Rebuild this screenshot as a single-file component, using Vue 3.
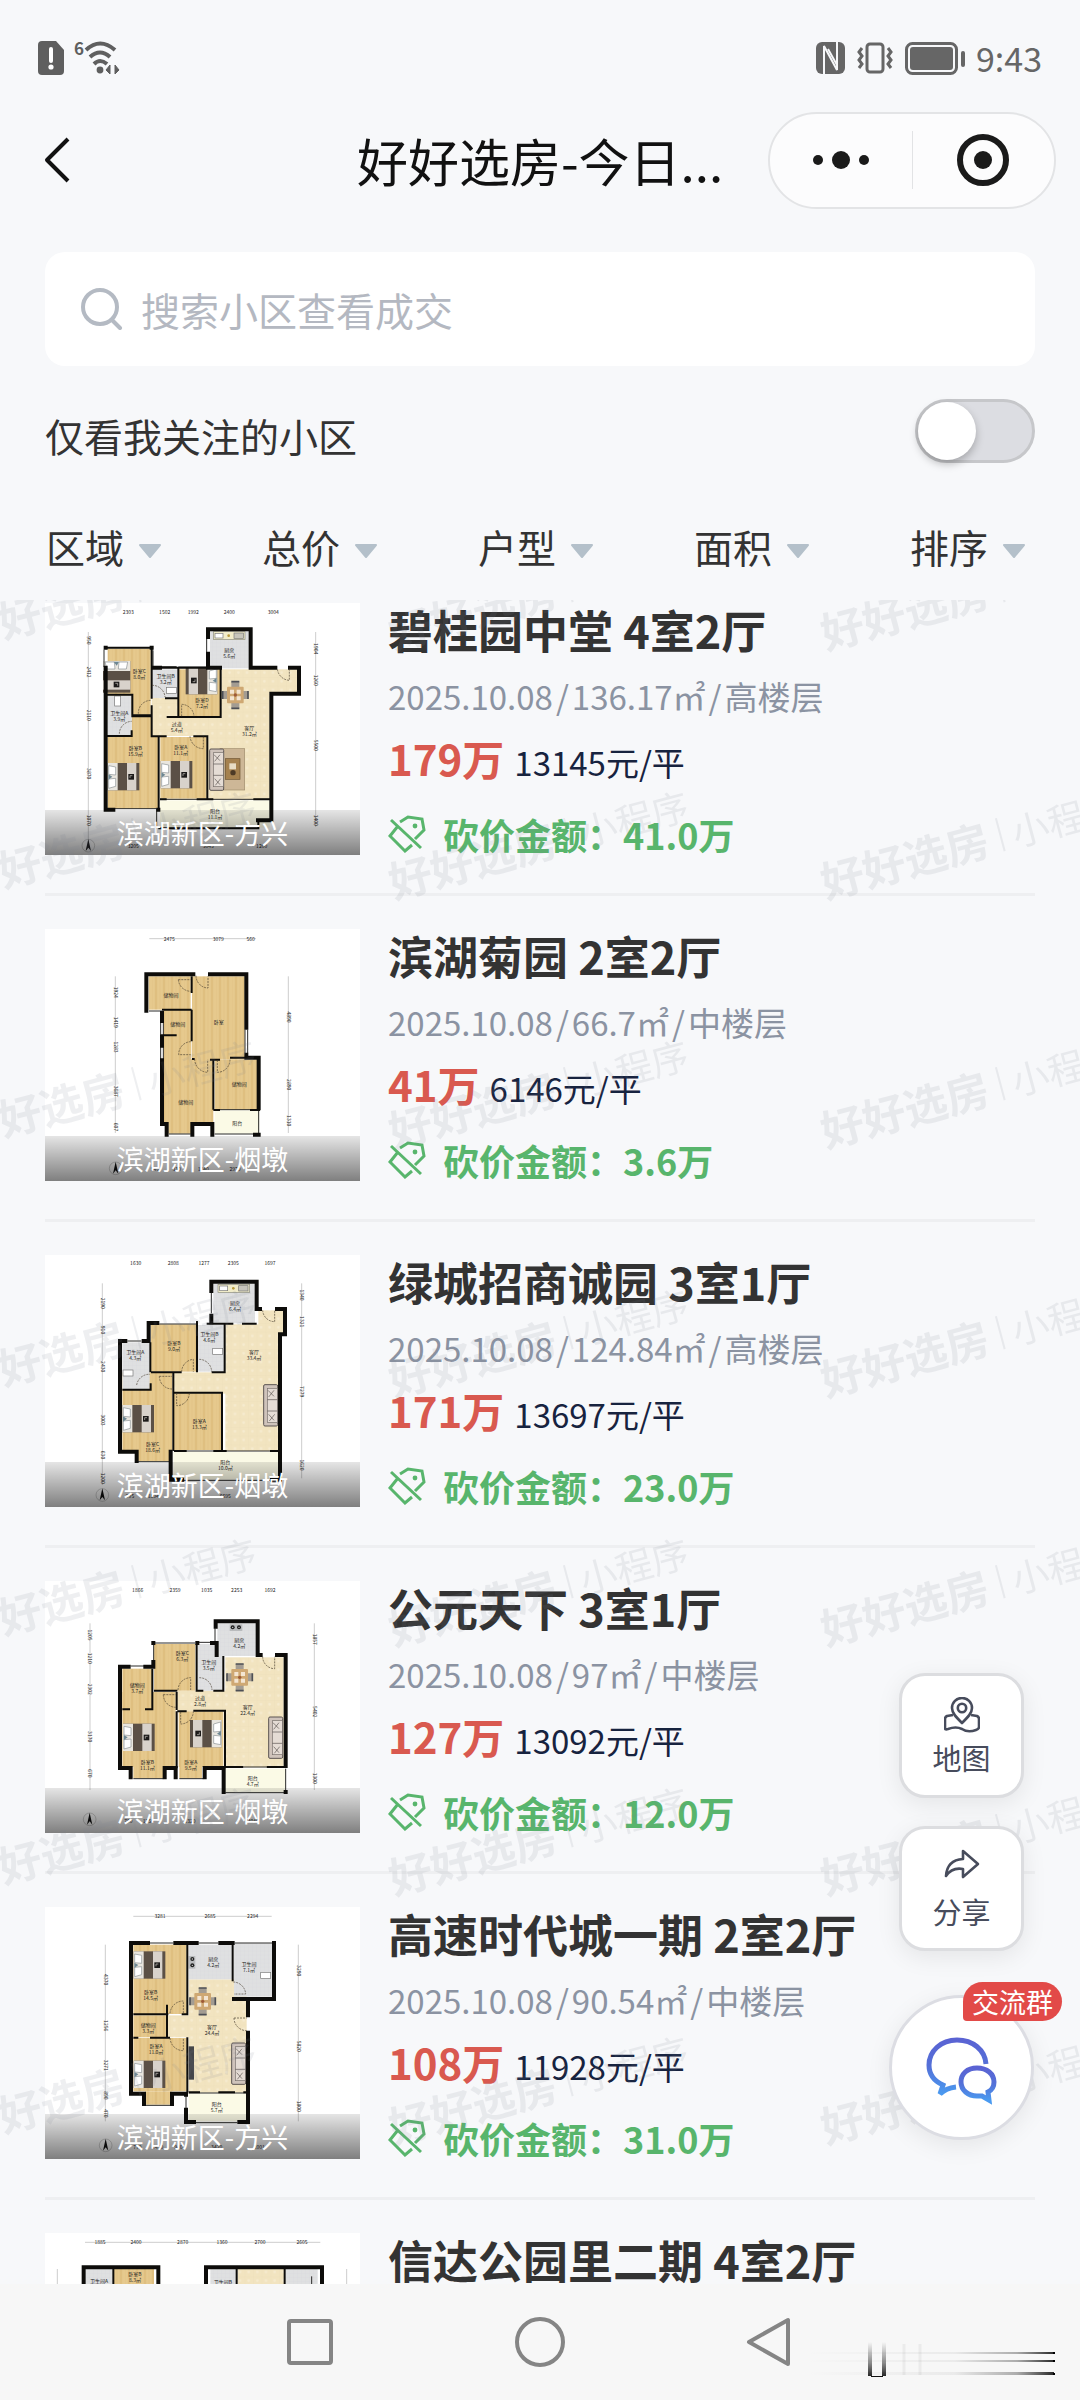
<template>
  <div class="app">
    <svg class="defs" width="0" height="0" aria-hidden="true">
      <defs>
        <symbol id="bed" viewBox="0 0 95 82" overflow="visible">
          <rect width="95" height="82" fill="#5b5046" />
          <rect width="30" height="82" fill="#e9e6df" />
          <path d="M3 8L24 12V36L3 34ZM3 48L24 46V70L3 76Z" fill="#fff" stroke="#8a8f92" stroke-width="2" />
          <path d="M2 34L14 41L2 50Z" fill="#6d8793" />
          <rect x="58" width="28" height="82" fill="#d8d2cb" />
          <rect x="62" y="33" width="17" height="17" fill="#1c1a19" />
          <path d="M67 45V38H74" fill="none" stroke="#cfc9c2" stroke-width="2" />
        </symbol>
        <symbol id="dining" viewBox="0 0 80 84" overflow="visible">
          <path d="M28 2H52V20H28ZM28 64H52V82H28ZM2 30H18V54H2ZM62 30H78V54H62Z" fill="#a39c92" />
          <path d="M28 2H52M28 82H52M2 30V54M78 30V54" stroke="#4d4f55" stroke-width="5" />
          <rect x="15" y="17" width="50" height="50" rx="3" fill="#cfa873" />
          <path d="M24 26h12v12h-12zM44 26h12v12h-12zM24 46h12v12h-12zM44 46h12v12h-12z" fill="#f4e5d2" />
          <circle cx="40" cy="42" r="5" fill="#9e5a38" />
        </symbol>
        <symbol id="sofa" viewBox="0 0 44 126" overflow="visible">
          <rect x="1" y="1" width="42" height="124" rx="4" fill="#cfc3bb" stroke="#5c5552" stroke-width="3" />
          <rect x="12" y="12" width="30" height="102" fill="#e5dcd5" stroke="#77706b" stroke-width="2" />
          <path d="M12 46H42M12 80H42M14 18L32 36M32 18L16 38M16 90L32 108M34 90L18 110" stroke="#59524f" stroke-width="2" />
        </symbol>
        <symbol id="rug" viewBox="0 0 74 124" overflow="visible">
          <rect width="74" height="124" fill="#cdb797" stroke="#a08c6d" stroke-width="2" />
          <rect x="16" y="30" width="44" height="62" fill="#a5814f" stroke="#6d5330" stroke-width="2" />
          <rect x="28" y="44" width="20" height="18" fill="#e8dcc4" />
          <circle cx="39" cy="72" r="8" fill="#4d3a26" />
        </symbol>
        <symbol id="stove" viewBox="0 0 95 26" overflow="visible">
          <rect width="95" height="24" fill="#f1ecc9" stroke="#8b8a7c" stroke-width="2" />
          <rect x="5" y="5" width="24" height="14" fill="#fff" stroke="#777" stroke-width="2" />
          <circle cx="46" cy="12" r="4" fill="#b89a3c" />
          <rect x="62" y="4" width="28" height="16" fill="#c7c5bb" stroke="#777" stroke-width="2" />
        </symbol>
        <symbol id="hob" viewBox="0 0 38 20" overflow="visible">
          <rect width="38" height="20" fill="#b9bbbd" />
          <circle cx="9" cy="9" r="6" fill="#222" />
          <circle cx="28" cy="9" r="6" fill="#222" />
          <circle cx="9" cy="9" r="2" fill="#ddd" />
          <circle cx="28" cy="9" r="2" fill="#ddd" />
        </symbol>
        <symbol id="basin" viewBox="0 0 30 18" overflow="visible">
          <rect width="30" height="18" fill="#fff" stroke="#777" stroke-width="2" />
        </symbol>
        <symbol id="compass" viewBox="0 0 40 60" overflow="visible">
          <circle cx="20" cy="38" r="19" fill="none" stroke="#777" stroke-width="1" />
          <path d="M20 18L28 54L20 44L12 54Z" fill="#111" />
        </symbol>
        <pattern id="wood" width="48" height="60" patternUnits="userSpaceOnUse">
          <rect width="48" height="60" fill="#e6c98d" />
          <path d="M12 0V60M36 0V60" stroke="#dfbf80" stroke-width="7" />
          <path d="M24 0V60M0 0V60" stroke="#d7b475" stroke-width="1" />
        </pattern>
        <pattern id="tile" width="12" height="12" patternUnits="userSpaceOnUse">
          <rect width="12" height="12" fill="#dfe0e1" />
          <path d="M0 0H12M0 0V12" stroke="#d3d5d7" stroke-width="1" />
        </pattern>
        <pattern id="stone" width="26" height="26" patternUnits="userSpaceOnUse">
          <rect width="26" height="26" fill="#f2e4c0" />
          <path d="M0 0H26M0 0V26" stroke="#eedfb8" stroke-width="2" />
          <circle cx="13" cy="13" r="4" fill="#f6ebcf" />
        </pattern>
        <linearGradient id="chat" x1="0" y1="0" x2="0" y2="1">
          <stop offset="0" stop-color="#5a63d3" />
          <stop offset="0.5" stop-color="#5471d8" />
          <stop offset="1" stop-color="#4a9af0" />
        </linearGradient>
      </defs>
    </svg>

    <div class="status-bar">
      <div class="status-group">
        <svg width="26" height="34" viewBox="0 0 26 34">
          <path d="M4 0H18L26 9V30a4 4 0 0 1-4 4H4a4 4 0 0 1-4-4V4a4 4 0 0 1 4-4Z" fill="#5f5f5f" />
          <path d="M13 8V20" stroke="#fff" stroke-width="4" stroke-linecap="round" />
          <circle cx="13" cy="26" r="2.6" fill="#fff" />
        </svg>
        <span class="wifi-gen">6</span>
        <svg width="36" height="34" viewBox="0 0 36 34" fill="none" stroke="#5f5f5f" stroke-width="4">
          <path d="M2 9Q16 -4 31 9M6 16Q16 7 26 16M10 23Q16 17 23 23" />
          <circle cx="16" cy="29" r="3.4" fill="#5f5f5f" stroke="none" />
          <path d="M26 24V33L22 29ZM31 24V33L35 29Z" fill="#5f5f5f" stroke-width="1" />
        </svg>
      </div>
      <div class="status-group right">
        <svg width="29" height="32" viewBox="0 0 29 32">
          <rect width="29" height="32" rx="6" fill="#666" />
          <path d="M8 32V4L21 28V0" fill="none" stroke="#f7f8fa" stroke-width="2" />
          <path d="M12 7L21 23" stroke="#f7f8fa" stroke-width="2" />
        </svg>
        <svg width="38" height="32" viewBox="0 0 38 32" fill="none" stroke="#666" stroke-width="3">
          <rect x="11" y="2" width="16" height="28" rx="3" />
          <path d="M6 6L3 10L6 14L3 18L6 22L3 26M32 6L35 10L32 14L35 18L32 22L35 26" />
        </svg>
        <svg width="60" height="33" viewBox="0 0 60 33">
          <rect x="1.5" y="1.5" width="50" height="30" rx="6" fill="none" stroke="#666" stroke-width="3" />
          <rect x="5" y="5" width="43" height="23" rx="3" fill="#666" />
          <rect x="56" y="9" width="4" height="16" rx="2" fill="#666" />
        </svg>
        <span class="clock">9:43</span>
      </div>
    </div>

    <header class="nav-bar">
      <button class="back" aria-label="返回">
        <svg width="26" height="46" viewBox="0 0 26 46" fill="none" stroke="#111" stroke-width="4">
          <path d="M24 2L3 23L24 44" stroke-linejoin="round" />
        </svg>
      </button>
      <h1>好好选房-今日...</h1>
      <div class="capsule">
        <button aria-label="更多">
          <svg width="58" height="20" viewBox="0 0 58 20" fill="#1a1a1a">
            <circle cx="6" cy="10" r="5" />
            <circle cx="29" cy="10" r="9" />
            <circle cx="52" cy="10" r="5" />
          </svg>
        </button>
        <span class="capsule-line"></span>
        <button aria-label="关闭">
          <svg width="54" height="54" viewBox="0 0 54 54">
            <circle cx="27" cy="27" r="23" fill="none" stroke="#1a1a1a" stroke-width="6" />
            <circle cx="27" cy="27" r="9" fill="#1a1a1a" />
          </svg>
        </button>
      </div>
    </header>

    <label class="search">
      <svg width="42" height="42" viewBox="0 0 42 42" fill="none" stroke="#b4bac3" stroke-width="4" stroke-linecap="round">
        <circle cx="19" cy="19" r="17" />
        <path d="M31 32L39 40" />
      </svg>
      <input v-model="keyword" type="text" placeholder="搜索小区查看成交" aria-label="搜索小区查看成交" />
    </label>

    <div class="follow-row">
      <label for="only-followed">仅看我关注的小区</label>
      <input id="only-followed" v-model="onlyFollowed" type="checkbox" class="switch" />
    </div>

    <div class="filters">
      <label v-for="name in filters" :key="name" class="filter">
        <select :aria-label="name">
          <option>{{ name }}</option>
        </select>
        <svg width="24" height="15" viewBox="0 0 24 15">
          <path d="M2 1H22L12 13Z" fill="#b4c0ca" stroke="#b4c0ca" stroke-width="2" stroke-linejoin="round" />
        </svg>
      </label>
    </div>

    <main class="list-wrap">
      <div class="list">
        <article v-for="item in houses" :key="item.name" class="house">
          <div class="thumb">
            <svg class="plan" :viewBox="item.plan.box">
              <template v-for="(rooms, kind) in item.plan.floors" :key="kind">
                <rect
                  v-for="(r, i) in rooms"
                  :key="i"
                  :x="r[0]"
                  :y="r[1]"
                  :width="r[2]"
                  :height="r[3]"
                  :fill="floorFill[kind]"
                />
              </template>
              <use
                v-for="(f, i) in item.plan.furniture"
                :key="'f' + i"
                :href="'#' + f[0]"
                :width="sizes[f[0]][0]"
                :height="sizes[f[0]][1]"
                :transform="`translate(${f[1]} ${f[2]}) rotate(${f[3] || 0})`"
              />
              <path :d="item.plan.windows" fill="none" stroke="#2a2a28" stroke-width="3" />
              <path :d="item.plan.thin" fill="none" stroke="#0d0c0a" stroke-width="6" />
              <path :d="item.plan.walls" fill="none" stroke="#0d0c0a" stroke-width="12" stroke-linecap="square" />
              <path :d="item.plan.doors" fill="none" stroke="#4a4030" stroke-width="2" stroke-dasharray="6 3" />
              <g class="plan-text">
                <template v-for="(l, i) in item.plan.labels" :key="'l' + i">
                  <text :x="l[0]" :y="l[1]">{{ l[2] }}</text>
                  <text v-if="l[3]" :x="l[0]" :y="l[1] + 18">{{ l[3] }}</text>
                </template>
              </g>
              <g class="plan-dims">
                <path :d="item.plan.rulers" stroke="#666" stroke-width="1" />
                <text v-for="(d, i) in item.plan.dims" :key="'d' + i" :x="d[0]" :y="d[1]">{{ d[2] }}</text>
                <text
                  v-for="(d, i) in item.plan.sideDims"
                  :key="'s' + i"
                  :transform="`translate(${d[0]} ${d[1]}) rotate(90)`"
                  y="5"
                >{{ d[2] }}</text>
              </g>
              <use
                v-if="item.plan.compass"
                href="#compass"
                :x="item.plan.compass[0]"
                :y="item.plan.compass[1]"
                width="40"
                height="60"
              />
            </svg>
            <div v-if="item.district" class="district">{{ item.district }}</div>
          </div>
          <div class="info">
            <h2>{{ item.name }} {{ item.rooms }}</h2>
            <template v-if="item.total">
              <p class="meta">
                <span>{{ item.date }}</span><i>/</i><span>{{ item.area }}㎡</span><i>/</i><span>{{ item.floor }}</span>
              </p>
              <p class="price">
                <strong>{{ item.total }}万</strong>
                <span>{{ item.unit }}元/平</span>
              </p>
              <p class="bargain">
                <svg width="38" height="38" viewBox="0 0 38 38" fill="none" stroke="#58b56c" stroke-width="3">
                  <path d="M12 7L20 2L34 4L36 15L27 24" />
                  <path d="M10 11L2 21L17 36L24 30" />
                  <path d="M3 5L33 33" />
                  <circle cx="27" cy="11" r="2.4" fill="#58b56c" stroke="none" />
                </svg>
                <span>砍价金额：{{ item.bargain }}万</span>
              </p>
            </template>
          </div>
        </article>
      </div>
      <svg class="watermark" width="100%" height="100%" aria-hidden="true">
        <defs>
          <pattern id="mark" x="380" y="57" width="432" height="249" patternUnits="userSpaceOnUse">
            <g transform="translate(14 242) rotate(-15)" fill="#7a8090">
              <text x="0" y="0" font-size="43" font-weight="700">好好选房</text>
              <rect x="184" y="-34" width="2" height="34" />
              <text x="197" y="-1" font-size="37">小程序</text>
            </g>
          </pattern>
        </defs>
        <rect width="100%" height="100%" fill="url(#mark)" />
      </svg>
    </main>

    <div class="floating">
      <button class="float-btn">
        <svg width="36" height="36" viewBox="0 0 36 36" fill="none" stroke="#474c5c" stroke-width="2.6" stroke-linejoin="round">
          <path d="M18 26C12 20 8 16 8 11a10 10 0 0 1 20 0c0 5-4 9-10 15Z" />
          <circle cx="18" cy="11" r="4.2" />
          <path d="M9 18L3 19Q1 20 1 22V31Q1 33 4 32Q12 29 18 32Q24 36 32 33Q35 32 35 30V22Q35 20 33 19L27 18" />
        </svg>
        <span>地图</span>
      </button>
      <button class="float-btn share">
        <svg width="36" height="30" viewBox="0 0 36 30" fill="none" stroke="#474c5c" stroke-width="2.6" stroke-linejoin="round">
          <path d="M19 2L34 15L19 28V20Q8 18 2 27Q3 11 19 10Z" />
        </svg>
        <span>分享</span>
      </button>
      <button class="chat-btn">
        <svg width="72" height="68" viewBox="0 0 72 68" fill="none" stroke="url(#chat)" stroke-width="5">
          <path d="M60 27C59 13 47 3 31 3C15 3 3 14 3 28C3 37 8 44 17 48L14 57Q20 51 30 50" />
          <path d="M51 31C41 31 35 37 35 45C35 53 42 59 51 59L56 59L63 63L62 55C66 53 68 49 68 45C68 37 61 31 51 31Z" />
        </svg>
        <span class="badge">交流群</span>
      </button>
    </div>

    <nav class="system-bar">
      <button aria-label="最近任务">
        <svg width="50" height="50" viewBox="0 0 50 50" fill="none" stroke="#858585" stroke-width="4">
          <rect x="4" y="4" width="42" height="42" rx="2" />
        </svg>
      </button>
      <button aria-label="主页">
        <svg width="50" height="50" viewBox="0 0 50 50" fill="none" stroke="#858585" stroke-width="4">
          <circle cx="25" cy="25" r="23" />
        </svg>
      </button>
      <button aria-label="返回上一页">
        <svg width="50" height="50" viewBox="0 0 50 50" fill="none" stroke="#858585" stroke-width="4" stroke-linejoin="round">
          <path d="M4 25L43 3V47Z" />
        </svg>
      </button>
      <svg class="streaks" width="250" height="38" viewBox="0 0 250 38">
        <defs>
          <linearGradient id="streak-x">
            <stop offset="0" stop-color="#222" stop-opacity="0" />
            <stop offset="0.6" stop-color="#222" stop-opacity="0.06" />
            <stop offset="0.85" stop-color="#222" stop-opacity="0.35" />
            <stop offset="1" stop-color="#111" stop-opacity="0.9" />
          </linearGradient>
          <linearGradient id="streak-y" x1="0" y1="0" x2="0" y2="1">
            <stop offset="0" stop-color="#222" stop-opacity="0" />
            <stop offset="0.6" stop-color="#222" stop-opacity="0.5" />
            <stop offset="1" stop-color="#111" stop-opacity="0.9" />
          </linearGradient>
        </defs>
        <path d="M98 4V35M114 4V35" stroke="#ebebeb" stroke-width="3" />
        <rect x="0" y="12" width="248" height="2" fill="url(#streak-x)" />
        <rect x="0" y="20" width="248" height="2" fill="url(#streak-x)" />
        <rect x="0" y="32" width="248" height="3" fill="url(#streak-x)" />
        <path d="M247 12h2v2h-2zM247 20h2v2h-2zM247 33h2v2h-2z" fill="#000" />
        <rect x="62" y="2" width="4" height="34" fill="url(#streak-y)" />
        <rect x="76" y="2" width="4" height="34" fill="url(#streak-y)" />
        <rect x="65" y="36" width="12" height="1" fill="#111" />
      </svg>
    </nav>
  </div>
</template>

<script setup>
import { ref } from 'vue'

const keyword = ref('')
const onlyFollowed = ref(false)
const filters = ['区域', '总价', '户型', '面积', '排序']

const floorFill = {
  wood: 'url(#wood)',
  tile: 'url(#tile)',
  stone: 'url(#stone)',
  balcony: '#fbfae6',
  dark: '#45464a'
}

const sizes = {
  bed: [95, 82],
  dining: [80, 84],
  sofa: [44, 126],
  rug: [74, 124],
  stove: [95, 26],
  hob: [38, 20],
  basin: [30, 18]
}

// 户型图：地板矩形、墙体路径、家具与标注
const planA = {
  box: '135 38 945 756',
  floors: {
    stone: [[664, 237, 145, 390], [800, 237, 92, 70], [455, 322, 215, 115], [625, 380, 60, 247]],
    wood: [[323, 175, 129, 200], [537, 237, 124, 142], [323, 440, 154, 215], [481, 440, 139, 185], [395, 378, 58, 65]],
    tile: [[455, 237, 78, 86], [323, 315, 72, 122], [630, 122, 118, 112]],
    balcony: [[480, 630, 329, 82]]
  },
  furniture: [['bed', 391, 212, 90], ['bed', 652, 312, 180], ['bed', 323, 518], ['bed', 482, 512], ['dining', 666, 272], ['rug', 660, 475], ['sofa', 628, 475], ['stove', 640, 124], ['basin', 500, 291], ['basin', 362, 317, 90]],
  walls: 'M624 140V117H752V232H826M870 232H897V310H814V690H774M624 190V232H660M317 172V172M455 172V172M317 232V658H340M460 232H480M475 658V658',
  thin: 'M317 172H455V232H535M455 232V325M455 345V375H400M317 313H397V378H455M395 420V437H317M476 440V655M455 375V438H500M495 324H535V232H662V380H500M535 325V380M580 438H622V625M480 627H500M590 627H640M760 627H812M475 714H775V690',
  windows: 'M312 178V230M459 180V230M485 229H530M535 230H660M330 655H470V714M620 145V185M480 627H812M480 714H770',
  doors: 'M415 370A38 38 0 0 1 452 330M456 285A38 38 0 0 1 495 320M545 378V342A38 38 0 0 1 582 378M570 438A40 40 0 0 0 610 475V438M358 430A38 38 0 0 1 395 393M868 235V270A38 38 0 0 1 832 235',
  labels: [[418, 248, '卧室C', '8.0㎡'], [497, 262, '卫生间B', '3.2㎡'], [606, 336, '卧室D', '7.2㎡'], [688, 185, '厨房', '5.6㎡'], [748, 418, '客厅', '31.2㎡'], [358, 374, '卫生间A', '3.9㎡'], [530, 408, '过道', '5.4㎡'], [406, 480, '卧室B', '15.9㎡'], [542, 476, '卧室A', '11.1㎡'], [645, 668, '阳台', '11.1㎡']],
  rulers: 'M265 125V770M947 125V710',
  dims: [[385, 71, '2303'], [494, 71, '1502'], [580, 71, '1992'], [688, 71, '2400'], [820, 71, '3004'], [400, 772, '3205'], [625, 772, '3045'], [785, 772, '1200']],
  sideDims: [[265, 150, '950'], [265, 245, '2412'], [265, 375, '2110'], [265, 550, '3870'], [265, 690, '1070'], [947, 175, '1904'], [947, 270, '1260'], [947, 465, '5500'], [947, 690, '1400']],
  compass: [245, 728]
}

const planB = {
  box: '15 28 945 756',
  floors: {
    wood: [[326, 170, 126, 100], [370, 270, 84, 150], [456, 170, 158, 250], [372, 418, 148, 194], [385, 600, 68, 42], [524, 420, 128, 150]],
    balcony: [[524, 572, 134, 70]]
  },
  furniture: [],
  walls: 'M460 164H319V273M510 164H619V324M619 405V414H656V566M366 280V304M366 350V378M366 422V613H380V645M457 645V613H517V645M645 645H656',
  thin: 'M455 170V220M455 270V365M366 270H455M370 347H410M520 420V570M456 418H464M510 420H540M570 414H619M520 571H540M630 571H660',
  windows: 'M327 274H366M387 643H452M524 643H656V572M362 308V345M362 382V418M370 308V345M370 382V418M615 330V400M623 330V400M524 570H650',
  doors: 'M415 180H452M415 180A38 38 0 0 0 452 215M468 168A37 37 0 0 0 504 205V170M452 366A38 38 0 0 0 416 405H452M464 418A40 40 0 0 0 503 458V420M570 420A38 38 0 0 1 532 458V420',
  labels: [[393, 232, '储物间'], [413, 318, '储物间'], [536, 314, '卧室'], [437, 552, '储物间'], [598, 498, '储物间'], [592, 615, '阳台']],
  rulers: 'M328 57H648M226 170V640M745 170V640',
  dims: [[388, 63, '2475'], [535, 63, '3079'], [632, 63, '560'], [345, 754, '940'], [410, 754, '330'], [490, 754, '1240'], [585, 754, '2920']],
  sideDims: [[226, 218, '1924'], [226, 308, '1419'], [226, 382, '1283'], [226, 515, '3687'], [226, 622, '607'], [745, 292, '4890'], [745, 495, '2890'], [745, 603, '1310']],
  compass: [207, 708]
}

const planC = {
  box: '15 30 945 756',
  floors: {
    stone: [[556, 238, 160, 380], [655, 196, 78, 72], [400, 382, 160, 64]],
    wood: [[333, 238, 136, 142], [247, 382, 150, 235], [292, 600, 96, 48], [402, 445, 142, 170]],
    tile: [[520, 115, 125, 120], [474, 240, 78, 140], [247, 292, 82, 140]],
    balcony: [[400, 620, 315, 84]]
  },
  furniture: [['bed', 247, 480], ['sofa', 670, 418], ['stove', 534, 118], ['basin', 518, 310], ['basin', 249, 375]],
  walls: 'M514 138V110H650V192H660M711 192H735V268H720V700M326 286V234H352M240 288H256M311 288H326M240 288V620H290V648M392 620V704H426M696 704H720M514 212V232',
  thin: 'M471 228V382M554 238V382H515M333 382H425M247 434H332V415M400 382V618M402 443H546V618M331 292V382M500 236H580M606 236H650M402 618H440M520 618H560M690 618H715',
  windows: 'M514 140V205M358 237H470M430 706H690M290 650H392M402 618H715M262 288H304',
  doors: 'M425 380A38 38 0 0 1 460 343V380M478 343A38 38 0 0 1 515 380M290 420A38 38 0 0 1 330 388M358 394H396M358 394A38 38 0 0 0 396 432M448 445A38 38 0 0 1 410 482V445M668 196A36 36 0 0 0 704 230V196',
  labels: [[585, 180, '厨房', '6.4㎡'], [508, 272, '卫生间B', '4.6㎡'], [402, 300, '卧室B', '9.0㎡'], [286, 328, '卫生间A', '4.3㎡'], [642, 328, '客厅', '33.4㎡'], [478, 534, '卧室A', '13.3㎡'], [338, 602, '卧室C', '18.6㎡'], [556, 657, '阳台', '10.0㎡']],
  rulers: 'M187 115V720M785 115V700',
  dims: [[287, 61, '1630'], [400, 61, '2808'], [492, 61, '1277'], [580, 61, '2305'], [690, 61, '1697'], [270, 760, '795'], [340, 760, '1804'], [556, 760, '6695']],
  sideDims: [[187, 175, '2190'], [187, 255, '910'], [187, 365, '2430'], [187, 525, '3003'], [187, 630, '630'], [187, 700, '1200'], [785, 150, '1340'], [785, 230, '1321'], [785, 440, '7279'], [785, 660, '1620']],
  compass: [167, 712]
}

const planD = {
  box: '15 33 945 756',
  floors: {
    stone: [[556, 262, 175, 330], [412, 362, 150, 62]],
    wood: [[342, 222, 124, 140], [247, 296, 90, 122], [247, 366, 160, 225], [280, 588, 90, 36], [416, 424, 134, 167], [418, 588, 68, 36]],
    tile: [[532, 160, 118, 98], [474, 222, 76, 140]],
    balcony: [[556, 596, 180, 70]]
  },
  furniture: [['bed', 249, 461], ['bed', 545, 532, 180], ['dining', 559, 280], ['sofa', 685, 440], ['hob', 569, 163]],
  walls: 'M527 170V154H653V255H662M711 255H737V588M340 219V219M340 276V290H316M266 290H240V594H272V622M374 622V594H407V622M494 622V594H551V666M472 219V219M516 219H530V255M737 666V666',
  thin: 'M470 222V362H490M520 362H550V258M342 362H412M410 366V420M410 424V595M412 424H440M460 422H555V595M337 296V418H315M247 418H270M556 591H610M680 591H737',
  windows: 'M525 175V220M342 219H466M341 222V275M475 217H515M272 288H315M280 626H370M418 626H490M556 668H737V596M610 591H680',
  doors: 'M414 360A38 38 0 0 1 452 323V360M478 323A38 38 0 0 1 516 360M370 374H407M370 374A38 38 0 0 0 407 412M460 424A38 38 0 0 1 422 462V424M668 260A36 36 0 0 0 704 296V260',
  labels: [[598, 217, '厨房', '4.2㎡'], [427, 256, '卧室C', '6.3㎡'], [506, 282, '卫生间', '3.5㎡'], [292, 350, '储物间', '3.7㎡'], [480, 390, '过道', '2.8㎡'], [623, 416, '客厅', '22.4㎡'], [322, 582, '卧室B', '11.1㎡'], [452, 582, '卧室A', '9.5㎡'], [638, 629, '阳台', '4.7㎡']],
  rulers: 'M150 160V660M823 160V660',
  dims: [[293, 67, '1866'], [405, 67, '2359'], [500, 67, '1035'], [590, 67, '2253'], [690, 67, '1692'], [265, 758, '700'], [325, 758, '1750'], [450, 758, '1320'], [640, 758, '3040']],
  sideDims: [[150, 195, '1205'], [150, 265, '1210'], [150, 358, '2302'], [150, 500, '3170'], [150, 610, '670'], [823, 208, '1857'], [823, 425, '5402'], [823, 625, '1300']],
  compass: [129, 710]
}

const planE = {
  box: '15 37 945 756',
  floors: {
    stone: [[446, 254, 174, 340], [384, 362, 64, 66]],
    wood: [[280, 150, 160, 208], [280, 362, 100, 66], [280, 430, 160, 160], [315, 590, 80, 40]],
    tile: [[446, 150, 132, 104], [582, 146, 115, 160]],
    balcony: [[446, 596, 172, 84]],
    dark: [[446, 455, 16, 100]]
  },
  furniture: [['bed', 281, 170], ['bed', 281, 498], ['dining', 448, 278], ['sofa', 574, 444], ['hob', 466, 184, 90], ['basin', 662, 233]],
  walls: 'M324 145H273V597H312V628M396 628V597H438V600M438 645V682H462M598 682H624V414M406 145H470M541 145H578M702 145V313H582M624 318V362',
  thin: 'M442 150V362M280 359H385M425 359H445M381 330V428M280 429H295M330 429H390M442 428V592M578 146V260M446 593H480M535 593H585M610 593H624',
  windows: 'M330 145H400M475 145H535M584 145H700M315 632H396M465 684H592M446 595H620M438 600V640',
  doors: 'M390 356A40 40 0 0 1 430 319V356M390 430A40 40 0 0 0 430 468V430M580 262A38 38 0 0 1 617 298H582M582 370H620M582 370A38 38 0 0 0 620 408',
  labels: [[520, 199, '厨房', '4.2㎡'], [627, 213, '卫生间', '7.1㎡'], [332, 298, '卧室B', '14.5㎡'], [325, 397, '储物间', '3.3㎡'], [516, 402, '客厅', '24.4㎡'], [348, 460, '卧室A', '11.0㎡'], [530, 634, '阳台', '5.7㎡']],
  rulers: 'M280 65H695M196 150V680M775 150V680',
  dims: [[360, 71, '3281'], [510, 71, '2685'], [638, 71, '2294'], [292, 762, '770'], [353, 762, '1410'], [415, 762, '940'], [530, 762, '3420'], [658, 762, '2001']],
  sideDims: [[196, 255, '4370'], [196, 393, '1256'], [196, 512, '3271'], [196, 602, '890'], [196, 656, '470'], [775, 228, '3290'], [775, 455, '5820'], [775, 635, '1800']],
  compass: [177, 714]
}

const planF = {
  box: '0 0 945 756',
  floors: {
    stone: [[578, 107, 140, 300]],
    wood: [[207, 107, 120, 300]],
    tile: [[122, 107, 80, 300], [496, 107, 78, 300], [722, 107, 96, 300]]
  },
  furniture: [],
  walls: 'M116 400V103H340V400M483 400V103H831V400',
  thin: 'M205 107V400M575 107V400M719 107V400',
  windows: 'M800 130V400',
  doors: '',
  labels: [[162, 150, '卫生间A'], [270, 128, '卧室B', '8.3㎡'], [534, 152, '卫生间B']],
  rulers: 'M120 28H826M37 108V400M905 108V400',
  dims: [[165, 34, '1885'], [273, 34, '2400'], [413, 34, '2870'], [531, 34, '1360'], [645, 34, '2700'], [771, 34, '2605']],
  sideDims: []
}

const houses = [
  { name: '碧桂园中堂', rooms: '4室2厅', date: '2025.10.08', area: '136.17', floor: '高楼层', total: 179, unit: 13145, bargain: '41.0', district: '滨湖新区-方兴', plan: planA },
  { name: '滨湖菊园', rooms: '2室2厅', date: '2025.10.08', area: '66.7', floor: '中楼层', total: 41, unit: 6146, bargain: '3.6', district: '滨湖新区-烟墩', plan: planB },
  { name: '绿城招商诚园', rooms: '3室1厅', date: '2025.10.08', area: '124.84', floor: '高楼层', total: 171, unit: 13697, bargain: '23.0', district: '滨湖新区-烟墩', plan: planC },
  { name: '公元天下', rooms: '3室1厅', date: '2025.10.08', area: '97', floor: '中楼层', total: 127, unit: 13092, bargain: '12.0', district: '滨湖新区-烟墩', plan: planD },
  { name: '高速时代城一期', rooms: '2室2厅', date: '2025.10.08', area: '90.54', floor: '中楼层', total: 108, unit: 11928, bargain: '31.0', district: '滨湖新区-方兴', plan: planE },
  { name: '信达公园里二期', rooms: '4室2厅', plan: planF }
]
</script>

<style>
body {
  margin: 0;
  background: #f7f8fa;
}
</style>

<style scoped>
.app {
  position: relative;
  display: flex;
  flex-direction: column;
  height: 100vh;
  overflow: hidden;
  background: #f7f8fa;
  color: #333;
  font-family: "Noto Sans CJK SC", "Noto Sans", sans-serif;
}

.defs {
  position: absolute;
}

button {
  display: flex;
  align-items: center;
  justify-content: center;
  padding: 0;
  border: none;
  background: none;
  color: inherit;
  font-family: inherit;
  cursor: pointer;
}

svg {
  flex: none;
}

.status-bar {
  display: flex;
  justify-content: space-between;
  align-items: center;
  height: 96px;
  padding: 20px 38px 0;
  box-sizing: border-box;
}

.status-group {
  display: flex;
  align-items: center;
}

.status-group.right {
  gap: 11px;
}

.wifi-gen {
  align-self: flex-start;
  margin-left: 10px;
  color: #5f5f5f;
  font-size: 17px;
  font-weight: 700;
  line-height: 14px;
}

.clock {
  color: #666;
  font-size: 34px;
  line-height: 34px;
}

.nav-bar {
  display: grid;
  grid-template-columns: 1fr auto 1fr;
  align-items: center;
  height: 128px;
  padding: 0 24px;
}

.back {
  justify-self: start;
  margin-left: 20px;
}

.nav-bar h1 {
  margin: 0;
  color: #111;
  font-size: 51px;
  font-weight: 400;
  line-height: 72px;
}

.capsule {
  justify-self: end;
  display: flex;
  align-items: center;
  width: 288px;
  height: 97px;
  box-sizing: border-box;
  border: 2px solid #e3e4e6;
  border-radius: 49px;
  background: #fcfcfd;
}

.capsule button {
  flex: 1;
}

.capsule-line {
  width: 1px;
  height: 58px;
  background: #e2e3e5;
}

.search {
  display: flex;
  align-items: center;
  gap: 18px;
  height: 114px;
  margin: 28px 45px 0;
  padding: 0 36px;
  box-sizing: border-box;
  border-radius: 20px;
  background: #fff;
}

.search input {
  flex: 1;
  min-width: 0;
  padding: 0;
  border: none;
  outline: none;
  background: none;
  color: #333;
  font-family: inherit;
  font-size: 39px;
}

.search input::placeholder {
  color: #b4b8c1;
  opacity: 1;
}

.follow-row {
  display: flex;
  justify-content: space-between;
  align-items: center;
  height: 130px;
  padding: 0 45px;
  font-size: 39px;
}

.follow-row label {
  padding-top: 8px;
}

.switch {
  position: relative;
  width: 120px;
  height: 64px;
  margin: 0 0 0 20px;
  box-sizing: border-box;
  border: 3px solid #c6c7ca;
  border-radius: 32px;
  background: #dcdde2;
  appearance: none;
  cursor: pointer;
}

.switch::before {
  content: "";
  position: absolute;
  top: 0;
  left: 0;
  width: 58px;
  height: 58px;
  border-radius: 50%;
  background: #fff;
  box-shadow: 0 4px 8px rgba(0, 0, 0, 0.25);
}

.switch:checked::before {
  left: 56px;
}

.filters {
  display: grid;
  grid-template-columns: repeat(5, 1fr);
  height: 104px;
}

.filter {
  display: flex;
  align-items: center;
  justify-content: center;
  gap: 13px;
  padding: 0 8px 4px 0;
}

.filter svg {
  margin-top: 10px;
}

.filter select {
  padding: 0;
  border: none;
  outline: none;
  background: none;
  color: #333;
  font-family: inherit;
  font-size: 39px;
  appearance: none;
}

.list-wrap {
  position: relative;
  flex: 1;
  min-height: 0;
  overflow: hidden;
}

.list {
  height: 100%;
  padding: 3px 45px 0;
  box-sizing: border-box;
  overflow-y: auto;
  scrollbar-width: none;
}

.house {
  display: flex;
  gap: 28px;
  margin-bottom: 33px;
  padding-bottom: 38px;
  border-bottom: 3px solid #eeeff1;
}

.thumb {
  position: relative;
  flex: none;
  width: 315px;
  height: 252px;
  background: #fff;
}

.plan {
  display: block;
  width: 100%;
  height: 100%;
}

.plan-text,
.plan-dims {
  fill: #222;
  font-size: 15px;
  text-anchor: middle;
}

.district {
  position: absolute;
  right: 0;
  bottom: 0;
  left: 0;
  height: 45px;
  background: linear-gradient(rgba(0, 0, 0, 0.1), rgba(0, 0, 0, 0.5));
  color: #fff;
  font-size: 27px;
  line-height: 45px;
  text-align: center;
}

.info {
  flex: 1;
  min-width: 0;
}

.info p {
  margin: 0;
  white-space: nowrap;
}

.info h2 {
  margin: 0;
  font-size: 45px;
  font-weight: 700;
  line-height: 54px;
  white-space: nowrap;
}

.info .meta {
  margin-top: 18px;
  color: #8b93a2;
  font-size: 33px;
  line-height: 42px;
}

.meta i {
  padding: 0 3px;
  font-style: normal;
}

.info .price {
  display: flex;
  align-items: baseline;
  gap: 10px;
  height: 50px;
  margin-top: 16px;
  line-height: 50px;
}

.price strong {
  color: #d9594f;
  font-size: 42px;
}

.price span {
  color: #17233f;
  font-size: 33px;
}

.info .bargain {
  display: flex;
  align-items: center;
  gap: 17px;
  margin-top: 30px;
  color: #58b56c;
  font-size: 36px;
  font-weight: 700;
  line-height: 42px;
}

.watermark {
  position: absolute;
  inset: 0;
  opacity: 0.12;
  pointer-events: none;
}

.floating {
  position: absolute;
  right: 46px;
  bottom: 260px;
  display: flex;
  flex-direction: column;
  align-items: center;
  gap: 28px;
}

.float-btn {
  flex-direction: column;
  gap: 6px;
  width: 125px;
  height: 125px;
  border: 3px solid #dcdde0;
  border-radius: 26px;
  background: #fff;
  box-shadow: 0 6px 24px rgba(0, 0, 0, 0.08);
  color: #474c5c;
  font-size: 29px;
  line-height: 36px;
}

.float-btn.share {
  gap: 14px;
}

.chat-btn {
  position: relative;
  width: 145px;
  height: 145px;
  margin-top: 16px;
  padding-top: 6px;
  border: 3px solid #dcdde3;
  border-radius: 50%;
  background: #fff;
  box-shadow: 0 6px 24px rgba(0, 0, 0, 0.08);
}

.badge {
  position: absolute;
  top: -16px;
  right: -31px;
  padding: 0 9px;
  border-radius: 20px 20px 20px 4px;
  background: #e24a48;
  color: #fff;
  font-size: 27px;
  line-height: 39px;
}

.system-bar {
  position: relative;
  display: flex;
  align-items: center;
  justify-content: center;
  gap: 180px;
  height: 116px;
  background: #f7f7f7;
}

.streaks {
  position: absolute;
  right: 24px;
  bottom: 22px;
}
</style>
